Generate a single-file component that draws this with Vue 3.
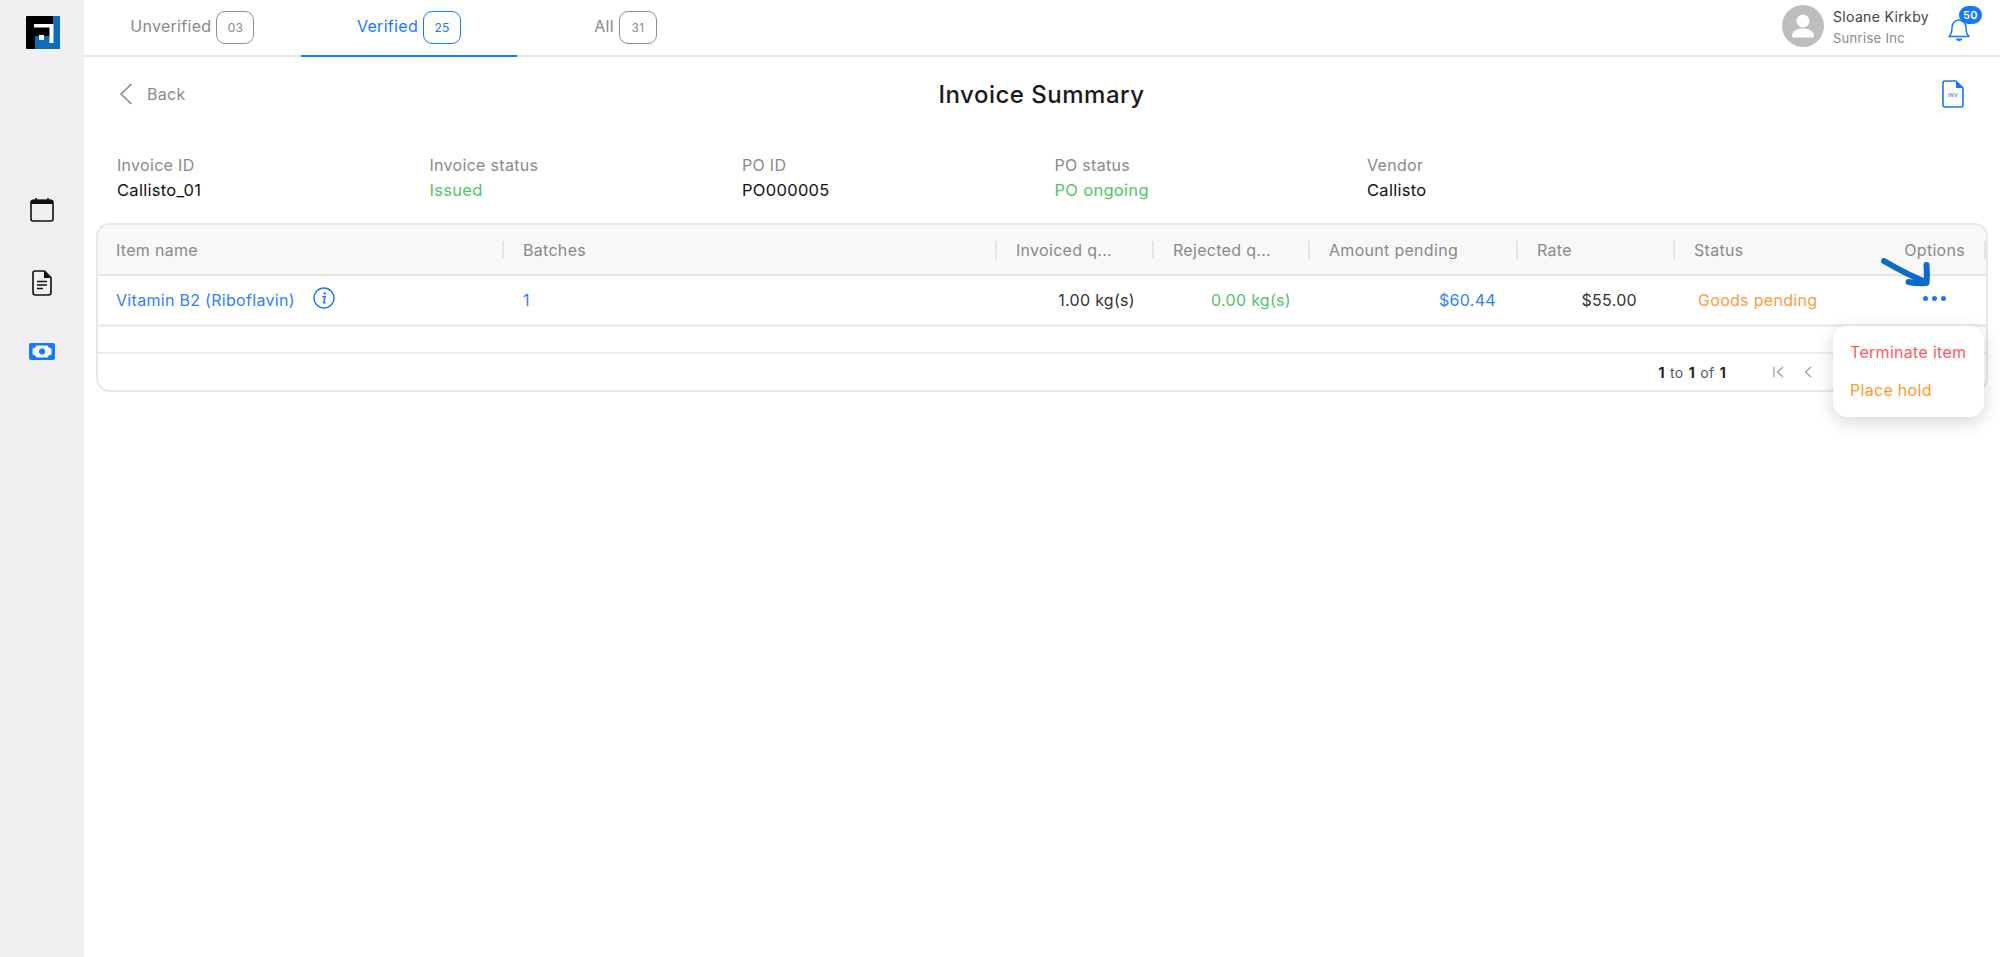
<script setup>
const tabs = [
  { label: 'Unverified', count: '03', active: false },
  { label: 'Verified', count: '25', active: true },
  { label: 'All', count: '31', active: false },
]
const info = [
  { label: 'Invoice ID', value: 'Callisto_01', cls: '' },
  { label: 'Invoice status', value: 'Issued', cls: 'green' },
  { label: 'PO ID', value: 'PO000005', cls: '' },
  { label: 'PO status', value: 'PO ongoing', cls: 'green' },
  { label: 'Vendor', value: 'Callisto', cls: '' },
]
const headers = ['Item name', 'Batches', 'Invoiced q...', 'Rejected q...', 'Amount pending', 'Rate', 'Status', 'Options']
</script>

<template>
  <div class="app">
    <aside class="sidebar">
      <svg class="logo" width="34" height="33" viewBox="0 0 34 33">
        <rect width="34" height="33" rx="1" fill="#000" />
        <path d="M27 0h7v33H9V20h18z" fill="#0a6ebd" />
        <path d="M8 8h19.500v19h-4V11.500H8z" fill="#fff" />
        <rect x="13" y="19" width="5" height="5" fill="#fff" />
      </svg>
      <nav class="nav">
        <svg width="26" height="26" viewBox="0 0 26 26">
          <rect x="2" y="3.500" width="22" height="20.500" rx="2" fill="none" stroke="#111" stroke-width="1.600" />
          <path d="M2 4.500a2 2 0 0 1 2-2h18a2 2 0 0 1 2 2V7H2z" fill="#111" />
          <path d="M7 1v3M19 1v3" stroke="#111" stroke-width="1.600" />
        </svg>
        <svg width="20" height="26" viewBox="0 0 20 26">
          <path d="M3 1h9.500L19 7.500V22.500a2.500 2.500 0 0 1-2.500 2.500H3.500A2.500 2.500 0 0 1 1 22.500V3a2 2 0 0 1 2-2z" fill="none" stroke="#111" stroke-width="1.600" />
          <path d="M12 1l7 7h-7z" fill="#111" />
          <path d="M5 11.500h10M5 15h10M5 18.500h6" stroke="#111" stroke-width="1.500" />
        </svg>
        <svg width="26" height="17" viewBox="0 0 26 17">
          <rect width="26" height="17" rx="2" fill="#1677ff" />
          <path d="M3.500 5.500c2-.3 3.500-1.500 4-3h11c.5 1.500 2 2.700 4 3v6c-2 .3-3.500 1.500-4 3h-11c-.5-1.500-2-2.700-4-3z" fill="#f4f6fb" />
          <circle cx="13" cy="8.500" r="3" fill="#1677ff" />
        </svg>
      </nav>
    </aside>

    <main class="main">
      <header class="topbar">
        <div class="tabs">
          <div v-for="t in tabs" :key="t.label" class="tab" :class="{ active: t.active }">
            <span>{{ t.label }}</span>
            <span class="count">{{ t.count }}</span>
          </div>
        </div>
        <div class="user">
          <svg width="42" height="42" viewBox="0 0 42 42">
            <circle cx="21" cy="21" r="21" fill="#bdbdbd" />
            <circle cx="21" cy="16" r="6.500" fill="#fff" />
            <path d="M10 31c0-5 5-7.500 11-7.500S32 26 32 31a1.500 1.500 0 0 1-1.500 1.500h-19A1.500 1.500 0 0 1 10 31z" fill="#fff" />
          </svg>
          <div class="user-text">
            <div class="user-name">Sloane Kirkby</div>
            <div class="user-org">Sunrise Inc</div>
          </div>
          <div class="bell">
            <svg width="22" height="24" viewBox="0 0 22 24">
              <path d="M1 19.500h20c-2-2-3-4-3-8.500 0-4.500-3-8-7-8s-7 3.500-7 8c0 4.500-1 6.500-3 8.500z" fill="none" stroke="#1677ff" stroke-width="1.500" stroke-linejoin="round" />
              <path d="M8 21.500h6a3 2.500 0 0 1-6 0z" fill="#1677ff" />
            </svg>
            <span class="bell-badge">50</span>
          </div>
        </div>
      </header>

      <div class="page-head">
        <div class="back">
          <svg width="14" height="22" viewBox="0 0 14 22">
            <path d="M12.500 1L2 11l10.500 10" fill="none" stroke="#8a8a8a" stroke-width="1.500" />
          </svg>
          <span>Back</span>
        </div>
        <h1 class="title">Invoice Summary</h1>
        <div class="doc">
          <svg width="22" height="28" viewBox="0 0 22 28">
            <path d="M3 1h11l7 7v17a2 2 0 0 1-2 2H3a2 2 0 0 1-2-2V3a2 2 0 0 1 2-2z" fill="none" stroke="#1677ff" stroke-width="1.600" stroke-linejoin="round" />
            <path d="M14 1l7 7h-7z" fill="#1677ff" />
            <text x="11" y="16.500" text-anchor="middle" class="inv">INV</text>
          </svg>
        </div>
      </div>

      <section class="info">
        <div v-for="i in info" :key="i.label" class="info-item">
          <div class="info-label">{{ i.label }}</div>
          <div class="info-value" :class="i.cls">{{ i.value }}</div>
        </div>
      </section>

      <section class="table">
        <div class="row head">
          <div v-for="(h, n) in headers" :key="h" class="hcell" :class="{ opt: n === 7 }">{{ h }}</div>
        </div>
        <div class="row body">
          <div class="cell first blue">
            <span>Vitamin B2 (Riboflavin)</span>
            <svg class="info-icon" width="22" height="22" viewBox="0 0 22 22">
              <circle cx="11" cy="11" r="10" fill="none" stroke="#1677ff" stroke-width="1.400" />
              <circle cx="11.800" cy="6.500" r="1.200" fill="#1677ff" />
              <path d="M9.300 9.800h2.700l-1.300 6h1.700" fill="none" stroke="#1677ff" stroke-width="1.500" />
            </svg>
          </div>
          <div class="cell blue batch">1</div>
          <div class="cell num">1.00 kg(s)</div>
          <div class="cell num green">0.00 kg(s)</div>
          <div class="cell num blue amount">$60.44</div>
          <div class="cell num rate">$55.00</div>
          <div class="cell orange status">Goods pending</div>
          <div class="cell dots"><i></i><i></i><i></i></div>
        </div>
        <div class="spacer"></div>
        <div class="footer">
          <div class="count-text"><b>1</b> to <b>1</b> of <b>1</b></div>
          <div class="pager">
            <svg width="11" height="12" viewBox="0 0 11 12">
              <path d="M1 1v10M10 1L4.500 6l5.500 5" fill="none" stroke="#9a9ea8" stroke-width="1.300" />
            </svg>
            <svg width="8" height="12" viewBox="0 0 8 12">
              <path d="M7 1L1.500 6 7 11" fill="none" stroke="#9a9ea8" stroke-width="1.300" />
            </svg>
            <span class="page-text">Page 1 of 1</span>
          </div>
        </div>

        <svg class="arrow" width="52" height="30" viewBox="0 0 52 30">
          <path d="M3 3c12 7 24 14 42 21M45.500 7c.5 6 .5 12 0 18-5 .5-11 .5-18-1" fill="none" stroke="#0a6cc8" stroke-width="6" stroke-linecap="round" stroke-linejoin="round" />
        </svg>

        <div class="menu">
          <div class="menu-item red">Terminate item</div>
          <div class="menu-item amber">Place hold</div>
        </div>
      </section>
    </main>
  </div>
</template>

<style scoped>
.app {
  display: flex;
  min-height: 957px;
  font-family: Inter, "Noto Sans", sans-serif;
  font-size: 16px;
  letter-spacing: 0.3px;
  color: #111;
  background: #fff;
}
.sidebar {
  width: 84px;
  flex: none;
  background: #f0f0f3;
  display: flex;
  flex-direction: column;
  align-items: center;
  padding-top: 16px;
  box-sizing: border-box;
}
.logo { margin-left: 1px; }
.nav {
  margin-top: 148px;
  display: flex;
  flex-direction: column;
  align-items: center;
  gap: 47px;
}
.main { flex: 1; min-width: 0; }

.topbar {
  height: 57px;
  box-sizing: border-box;
  border-bottom: 2px solid #e6e6e6;
  display: flex;
  justify-content: space-between;
}
.tabs { display: flex; }
.tab {
  width: 216.670px;
  height: 57px;
  box-sizing: border-box;
  display: flex;
  align-items: center;
  justify-content: center;
  gap: 5px;
  padding-bottom: 3px;
  color: #8a8a8a;
  border-bottom: 2px solid transparent;
}
.tab.active { color: #1677ff; border-bottom-color: #1677ff; }
.count {
  width: 38px;
  height: 33px;
  box-sizing: border-box;
  border: 1.500px solid #8f8f8f;
  border-radius: 9px;
  font-size: 12px;
  display: flex;
  align-items: center;
  justify-content: center;
  margin-top: 3px;
}
.tab.active .count { border-color: #1677ff; }

.user {
  display: flex;
  align-items: flex-start;
  padding: 5px 30px 0 0;
}
.user-text { margin-left: 9px; }
.user-name {
  font-size: 14px;
  line-height: 17px;
  margin-top: 3px;
  letter-spacing: 0.35px;
  color: #444;
}
.user-org {
  font-size: 13px;
  line-height: 16px;
  margin-top: 5px;
  color: #8a8a8a;
}
.bell {
  position: relative;
  margin: 12px 0 0 19px;
  width: 22px;
  height: 24px;
}
.bell-badge {
  position: absolute;
  left: 11px;
  top: -11px;
  width: 23px;
  height: 18px;
  border-radius: 9px;
  background: #1677ff;
  color: #fff;
  font-size: 11px;
  font-weight: 600;
  display: flex;
  align-items: center;
  justify-content: center;
}

.page-head {
  display: grid;
  grid-template-columns: 1fr auto 1fr;
  align-items: center;
  height: 74px;
  padding: 0 36px 0 35px;
}
.back {
  display: flex;
  align-items: center;
  gap: 14px;
  color: #8a8a8a;
}
.title {
  margin: 0;
  font-size: 24px;
  font-weight: 500;
  letter-spacing: 0.5px;
  color: #1a1a1a;
}
.doc { justify-self: end; display: flex; }
.inv {
  font-family: Inter, sans-serif;
  font-size: 5px;
  font-weight: 700;
  fill: #7b8cc9;
}

.info {
  display: grid;
  grid-template-columns: repeat(5, 312.500px);
  padding: 23px 0 0 33px;
  height: 71px;
  box-sizing: border-box;
}
.info-label { color: #8a8a8a; line-height: 22px; }
.info-value { font-size: 16.500px; line-height: 22px; margin-top: 3px; color: #111; }
.green { color: #52c468 !important; }

.table {
  position: relative;
  margin: 21px 12px 0 12px;
  height: 169px;
  box-sizing: border-box;
  border: 2px solid #e8e8e8;
  border-radius: 14px;
  display: flex;
  flex-direction: column;
}
.row {
  display: grid;
  grid-template-columns: 404px 493px 157px 156px 208px 157px 1fr 88px;
  flex: none;
}
.head {
  background: #f8f8f8;
  border-bottom: 2px solid #e8e8e8;
  border-radius: 12px 12px 0 0;
  align-items: center;
  box-sizing: border-box;
  height: 51px;
}
.hcell {
  padding-left: 19px;
  color: #8a8a8a;
  height: 18px;
  line-height: 18px;
  border-left: 2px solid #e4e4e4;
  white-space: nowrap;
}
.hcell:first-child { border-left: 0; padding-left: 18px; }
.hcell.opt {
  border-left: 0;
  border-right: 2px solid #e4e4e4;
  padding-left: 0;
  text-align: right;
  padding-right: 19px;
}
.body {
  height: 51px;
  box-sizing: border-box;
  border-bottom: 3px solid #ecedf3;
  align-items: center;
}
.cell { color: #333; padding-bottom: 1px; white-space: nowrap; }
.cell.first {
  padding-left: 18px;
  display: flex;
  align-items: center;
  gap: 18px;
}
.info-icon { margin-top: -3px; }
.blue { color: #2f80ff; }
.orange { color: #ff9a3d; }
.batch { padding-left: 21px; }
.num { text-align: right; padding-right: 17px; }
.num.green { padding-right: 17px; }
.num.amount { padding-right: 20px; }
.num.rate { padding-right: 36px; }
.status { padding-left: 25px; }
.dots {
  display: flex;
  gap: 4px;
  padding-left: 1px;
  margin-top: -3px;
  margin-left: 24px;
}
.dots i {
  width: 5px;
  height: 5px;
  border-radius: 50%;
  background: #1677ff;
}
.spacer {
  height: 27px;
  flex: none;
  box-sizing: border-box;
  border-bottom: 2px solid #ececec;
}
.footer {
  flex: 1;
  display: flex;
  align-items: center;
  justify-content: flex-end;
}
.count-text { font-size: 14px; color: #555; margin-right: 47px; word-spacing: 1px; }
.count-text b { color: #222; font-weight: 700; }
.pager {
  display: flex;
  align-items: center;
  gap: 20px;
  width: 213px;
  font-size: 14px;
  color: #8a7a9a;
}
.page-text { margin-left: 1px; white-space: nowrap; }

.arrow {
  position: absolute;
  right: 53px;
  top: 33px;
}
.menu {
  position: absolute;
  right: 2px;
  top: 101px;
  width: 151px;
  height: 91px;
  box-sizing: border-box;
  padding: 8px 0 0 17px;
  background: #fff;
  border-radius: 14px;
  box-shadow: 0 5px 18px rgba(0, 0, 0, 0.16);
  z-index: 2;
}
.menu-item { height: 37px; line-height: 37px; white-space: nowrap; }
.menu-item.amber { margin-top: 1px; }
.red { color: #ff5a5f; }
.amber { color: #ff9a1f; }
</style>
